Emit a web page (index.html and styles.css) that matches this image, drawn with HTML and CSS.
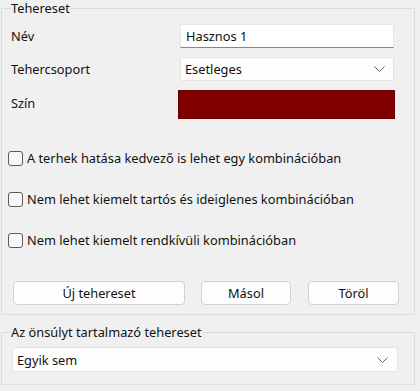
FILE: index.html
```html
<!DOCTYPE html>
<html lang="hu">
<head>
    <meta charset="UTF-8">
    <meta name="viewport" content="width=device-width, initial-scale=1.0">
    <title>Tehereset</title>
    <link rel="stylesheet" href="styles.css">
</head>
<body>
    <fieldset class="group">
        <legend>Tehereset</legend>
        <div class="form">
            <label class="lbl" for="nev">Név</label>
            <input class="text" id="nev" type="text" value="Hasznos 1">
            <span class="lbl">Tehercsoport</span>
            <div class="combo">
                <span>Esetleges</span>
                <svg class="chev" width="11" height="6" viewBox="0 0 11 6"><path d="M0.5 0.5 L5.5 5.5 L10.5 0.5" fill="none" stroke="#606060" stroke-width="1"/></svg>
            </div>
            <span class="lbl up">Szín</span>
            <div class="color"></div>
        </div>
        <div class="checks">
            <label class="check"><span class="box"></span>A terhek hatása kedvező is lehet egy kombinációban</label>
            <label class="check"><span class="box"></span>Nem lehet kiemelt tartós és ideiglenes kombinációban</label>
            <label class="check"><span class="box"></span>Nem lehet kiemelt rendkívüli kombinációban</label>
        </div>
        <div class="buttons">
            <button class="btn wide">Új tehereset</button>
            <button class="btn">Másol</button>
            <button class="btn last">Töröl</button>
        </div>
    </fieldset>

    <fieldset class="group second">
        <legend>Az önsúlyt tartalmazó tehereset</legend>
        <div class="combo full">
            <span>Egyik sem</span>
            <svg class="chev" width="11" height="6" viewBox="0 0 11 6"><path d="M0.5 0.5 L5.5 5.5 L10.5 0.5" fill="none" stroke="#606060" stroke-width="1"/></svg>
        </div>
    </fieldset>
</body>
</html>
```

FILE: styles.css
```css
body {
    margin: 0;
    background-color: #f0f0f0;
    font-family: "Noto Sans", Arial, sans-serif;
    font-size: 12.8px;
    color: #111;
}
.group {
    margin: 0 5px 0 1px;
    padding: 0 19px 9px 9px;
    border: 1px solid #dcdcdc;
    min-width: 0;
}
.group legend {
    padding: 0;
    line-height: 16px;
}
.form {
    display: grid;
    grid-template-columns: 169px 214px;
    grid-template-rows: 24px 24px 29px;
    row-gap: 9px;
    margin-top: 8px;
    align-items: center;
}
.form .lbl {
    line-height: 16px;
}
.form .lbl.up {
    margin-bottom: 4px;
}
.text {
    box-sizing: border-box;
    height: 24px;
    width: 214px;
    margin: 0;
    padding: 0 5px;
    font: inherit;
    color: #111;
    background: #fff;
    border: 1px solid #e6e6e6;
    border-bottom: 1px solid #868686;
    outline: none;
}
.combo {
    box-sizing: border-box;
    height: 24px;
    display: flex;
    align-items: center;
    justify-content: space-between;
    padding: 0 8px 0 4px;
    background: #fdfdfd;
    border: 1px solid #e3e3e3;
    border-radius: 2px;
}
.chev {
    display: block;
}
.color {
    height: 29px;
    width: 217px;
    margin-left: -2px;
    box-sizing: border-box;
    background: #800000;
    border: 1px solid #6a0000;
}
.checks {
    display: flex;
    flex-direction: column;
    gap: 25px;
    margin-top: 31px;
    margin-left: -3px;
}
.check {
    display: flex;
    align-items: center;
    gap: 4px;
    height: 16px;
    line-height: 16px;
}
.box {
    box-sizing: border-box;
    width: 15px;
    height: 15px;
    border: 1px solid #5b5b5b;
    border-radius: 3px;
    background: #f7f7f7;
}
.buttons {
    display: flex;
    margin-top: 33px;
    margin-left: 2px;
}
.btn {
    flex-shrink: 0;
    box-sizing: border-box;
    height: 24px;
    width: 90px;
    margin: 0 17px 0 0;
    padding: 0;
    font: inherit;
    color: #111;
    background: #fdfdfd;
    border: 1px solid #d0d0d0;
    border-radius: 4px;
}
.btn.wide {
    width: 172px;
    margin-right: 16px;
}
.btn.last {
    width: 91px;
    margin-right: 0;
}
.second {
    margin-top: 9px;
    padding: 0 16px 12px 9px;
}
.combo.full {
    margin-top: 7px;
    margin-left: 1px;
    height: 25px;
    padding-right: 9px;
}
```
